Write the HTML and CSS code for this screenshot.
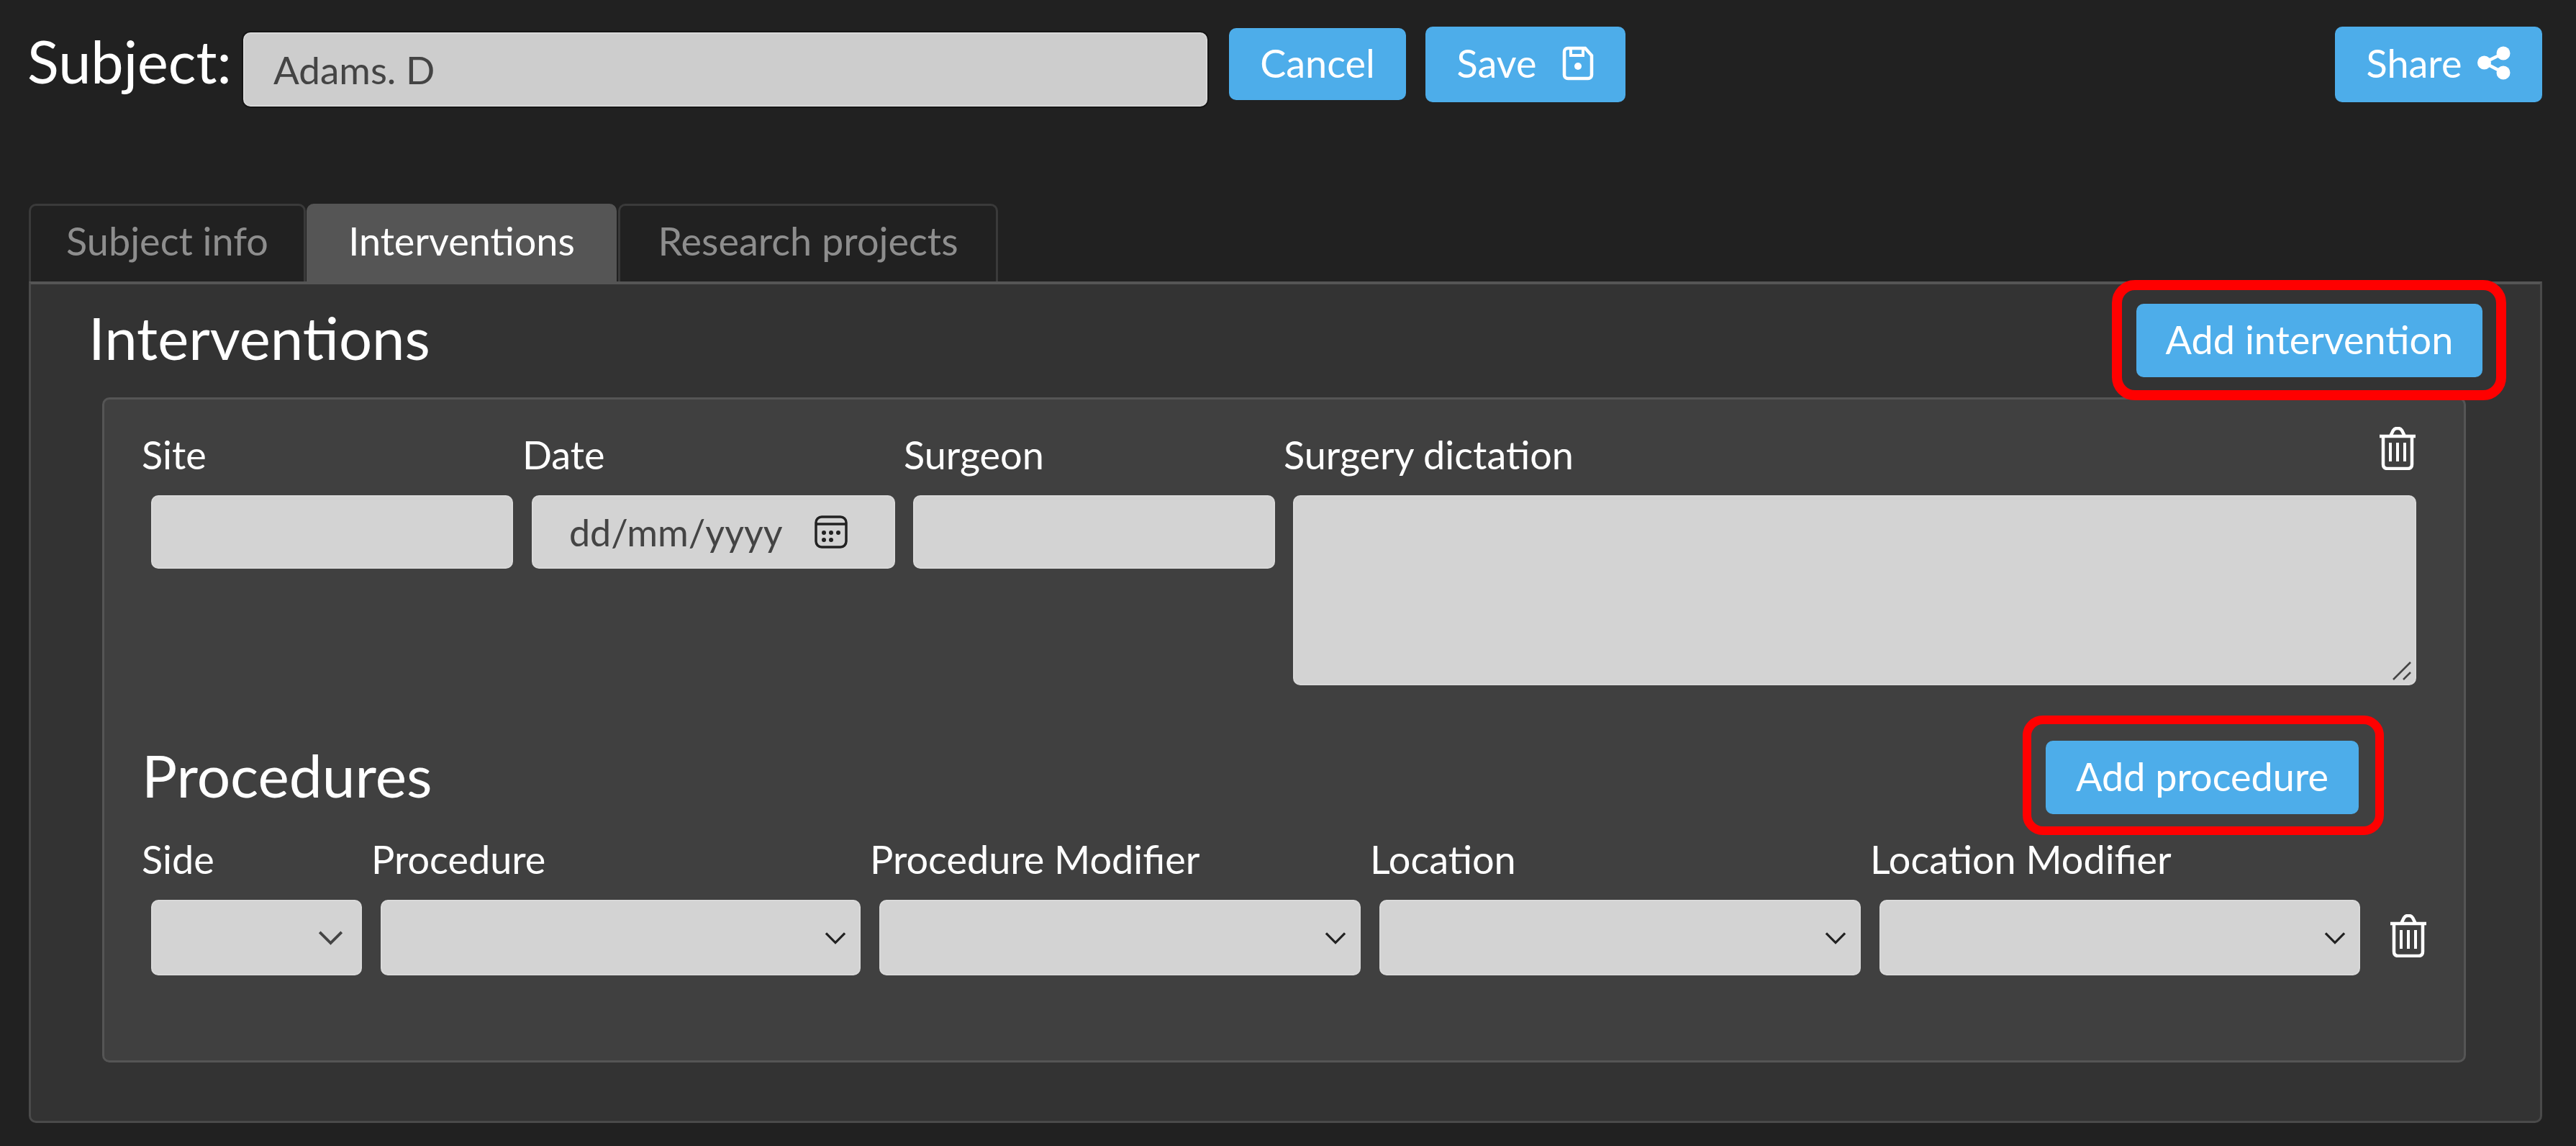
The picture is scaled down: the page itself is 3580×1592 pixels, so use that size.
FILE: index.html
```html
<!DOCTYPE html>
<html lang="en">
<head>
<meta charset="utf-8">
<title>Subject</title>
<link rel="stylesheet" href="styles.css">
</head>
<body>
<header class="topbar">
  <h1 class="subject-label">Subject:</h1>
  <input class="subject-input" type="text" value="Adams. D" aria-label="Subject">
  <button class="btn btn-cancel">Cancel</button>
  <button class="btn btn-save">Save
    <svg class="icon-save" viewBox="0 0 44 48" fill="none" stroke="#fff" stroke-width="4.5"><path d="M8 3h24l9 10v27a5 5 0 0 1-5 5H8a5 5 0 0 1-5-5V8a5 5 0 0 1 5-5z"/><path d="M12 3v10h17V3" stroke-width="4"/><circle cx="22" cy="28" r="5" fill="#fff" stroke="none"/></svg>
  </button>
  <button class="btn btn-share">Share
    <svg class="icon-share" viewBox="0 0 46 48" fill="#fff"><circle cx="36" cy="10" r="9.500"/><circle cx="36" cy="37" r="9.500"/><circle cx="9.500" cy="23" r="9.500"/><path d="M9.500 23L36 10M9.500 23L36 37" stroke="#fff" stroke-width="4.500"/></svg>
  </button>
</header>

<nav class="tabs">
  <div class="tab tab-subject">Subject info</div>
  <div class="tab tab-active">Interventions</div>
  <div class="tab tab-research">Research projects</div>
</nav>

<main class="panel">
  <div class="panel-head">
    <h2 class="panel-title">Interventions</h2>
    <div class="mark mark-intervention"><button class="btn btn-add-intervention">Add intervention</button></div>
  </div>

  <section class="card">
    <div class="intervention-grid">
      <label class="lbl lbl-site">Site</label>
      <label class="lbl lbl-date">Date</label>
      <label class="lbl lbl-surgeon">Surgeon</label>
      <div class="lbl lbl-dictation"><span>Surgery dictation</span>
        <svg class="icon-trash" viewBox="0 0 52 60" fill="none" stroke="#fff" stroke-width="4.500"><path d="M1 13h50M16 13l4-8q2-3 5-3h2q3 0 5 3l4 8"/><path d="M6 13v39q0 6 6 6h28q6 0 6-6V13"/><path d="M16 22v26M26 22v26M36 22v26" stroke-width="4"/></svg>
      </div>
      <div class="field field-site"></div>
      <div class="field field-date"><span>dd/mm/yyyy</span>
        <svg class="icon-cal" viewBox="0 0 46 46" fill="none" stroke="#222" stroke-width="3.500"><rect x="2" y="2" width="42" height="42" rx="8"/><path d="M2 12h42"/><g fill="#222" stroke="none"><circle cx="13" cy="24" r="3"/><circle cx="23" cy="24" r="3"/><circle cx="33" cy="24" r="3"/><circle cx="13" cy="34" r="3"/><circle cx="23" cy="34" r="3"/></g></svg>
      </div>
      <div class="field"></div>
      <div class="field field-text">
        <svg class="grip" viewBox="0 0 28 28" fill="none" stroke="#444" stroke-width="2.500"><path d="M2 26L26 2M16 26l10-10"/></svg>
      </div>
    </div>

    <div class="procedures-head">
      <h3 class="procedures-title">Procedures</h3>
      <div class="mark mark-procedure"><button class="btn btn-add-procedure">Add procedure</button></div>
    </div>

    <div class="procedure-grid">
      <label class="lbl">Side</label>
      <label class="lbl">Procedure</label>
      <label class="lbl">Procedure Modifier</label>
      <label class="lbl">Location</label>
      <label class="lbl">Location Modifier</label>
      <span></span>
      <select class="sel sel-side" aria-label="Side"></select>
      <select class="sel" aria-label="Procedure"></select>
      <select class="sel" aria-label="Procedure Modifier"></select>
      <select class="sel" aria-label="Location"></select>
      <select class="sel" aria-label="Location Modifier"></select>
      <svg class="icon-trash icon-trash-row" viewBox="0 0 52 60" fill="none" stroke="#fff" stroke-width="4.500"><path d="M1 13h50M16 13l4-8q2-3 5-3h2q3 0 5 3l4 8"/><path d="M6 13v39q0 6 6 6h28q6 0 6-6V13"/><path d="M16 22v26M26 22v26M36 22v26" stroke-width="4"/></svg>
    </div>
  </section>
</main>
</body>
</html>
```
FILE: styles.css
```css
* { box-sizing: border-box; }
html, body { margin: 0; height: 100%; }
body {
  background: #212121;
  color: #fff;
  font-family: Lato, "Open Sans", sans-serif;
  padding: 37px 47px 0 40px;
  overflow: hidden;
}
h1, h2, h3 { margin: 0; font-weight: 400; }

.btn {
  display: inline-flex;
  align-items: center;
  justify-content: center;
  border: 0;
  border-radius: 10px;
  background: #4dadea;
  color: #fff;
  font: 400 54px/1 Lato, sans-serif;
  padding: 0 0 3px;
}

/* Header */
.topbar { display: flex; align-items: flex-start; height: 246px; }
.subject-label { font-size: 81px; line-height: 96px; width: 298px; flex: none; margin: 0 0 0 -2px; }
.subject-input {
  width: 1340px;
  height: 103px;
  margin: 8px 0 0 2px;
  padding: 0 0 0 40px;
  border: 2px solid #d8d8d8;
  border-radius: 10px;
  background: #cdcdcd;
  color: #444;
  font: 400 53px Lato, sans-serif;
  box-shadow: 0 0 0 2px #151515;
}
.btn-cancel { width: 246px; height: 100px; margin: 2px 0 0 30px; }
.btn-save { width: 278px; height: 105px; margin-left: 27px; gap: 36px; }
.btn-share { width: 288px; height: 105px; margin-left: auto; gap: 22px; }
.icon-save { width: 44px; height: 48px; }
.icon-share { width: 46px; height: 48px; }

/* Tabs */
.tabs { display: flex; gap: 2px; height: 108px; }
.tab {
  display: flex;
  align-items: center;
  justify-content: center;
  border: 3px solid #3a3a3a;
  border-bottom: 0;
  border-radius: 10px 10px 0 0;
  font-size: 54px;
  color: #8e8e8e;
  padding-bottom: 8px;
}
.tab-subject { width: 385px; }
.tab-active { width: 431px; margin-left: -1px; background: #555; border-color: #555; color: #fff; }
.tab-research { width: 528px; }

/* Panel */
.panel {
  height: 1169px;
  background: #333;
  border: 3px solid #4a4a4a;
  border-top: 4px solid #555;
  border-radius: 0 0 10px 10px;
  padding: 27px 80px 0 99px;
}
.panel-head { display: flex; justify-content: space-between; align-items: flex-start; height: 130px; }
.panel-title { font-size: 81.500px; line-height: 96px; margin: -1px 0 0 -19px; }
.mark { position: relative; }
.mark::after {
  content: "";
  position: absolute;
  border: 14px solid #f00;
  border-radius: 32px;
  pointer-events: none;
}
.mark-intervention::after { inset: -33px -33px -32px -34px; }
.mark-procedure::after { inset: -35px -35px -29px -32px; border-width: 12px; border-radius: 28px; }
.btn-add-intervention { width: 481px; height: 102px; display: flex; }
.btn-add-procedure { width: 435px; height: 102px; display: flex; }

/* Card */
.card {
  width: 3285px;
  height: 924px;
  background: #404040;
  border: 3px solid #555;
  border-radius: 10px;
  padding: 46px 0 0 53px;
}
.lbl { font-size: 54px; line-height: 62px; display: block; margin-left: -13px; }

.intervention-grid {
  display: grid;
  grid-template-columns: 504px 505px 503px 1561px;
  column-gap: 25px;
  row-gap: 25px;
  grid-template-rows: 62px 264px;
  margin-left: 12px;
}
.lbl-dictation { display: flex; justify-content: space-between; align-items: flex-start; }
.field {
  height: 102px;
  background: #d3d3d3;
  border-radius: 10px;
  border: 2px solid #d9d9d9;
  color: #444;
}
.field-site { width: 503px; }
.field-date {
  display: flex;
  align-items: center;
  justify-content: space-between;
  padding: 0 64px 0 50px;
  font-size: 52px;
}
.field-text { height: 264px; position: relative; }
.grip { position: absolute; right: 4px; bottom: 4px; width: 28px; height: 28px; }
.icon-cal { width: 46px; height: 46px; flex: none; }
.icon-trash { width: 52px; height: 60px; flex: none; margin-top: -8px; }

.procedures-head {
  display: flex;
  justify-content: space-between;
  align-items: flex-start;
  width: 3080px;
  height: 211px;
  padding-top: 117px;
}
.procedures-title { font-size: 82px; line-height: 92px; margin: -39px 0 0 -1px; }
.procedures-head .mark { margin-top: -40px; }

.procedure-grid {
  display: grid;
  grid-template-columns: 293px 667px 669px 669px 668px 54px;
  column-gap: 26px;
  row-gap: 25px;
  grid-template-rows: 62px 105px;
  margin-left: 12px;
  align-items: start;
}
.procedure-grid .icon-trash-row { margin: 20px 0 0 15px; }
.sel {
  appearance: none;
  height: 105px;
  width: 100%;
  border: 2px solid #d9d9d9;
  border-radius: 10px;
  background: #d3d3d3 url("data:image/svg+xml,%3Csvg xmlns='http://www.w3.org/2000/svg' viewBox='0 0 36 22'%3E%3Cpath d='M2 3l16 16L34 3' fill='none' stroke='%23222' stroke-width='4'/%3E%3C/svg%3E") no-repeat right 18px center / 30px 18px;
}
.sel-side {
  background: #d3d3d3 url("data:image/svg+xml,%3Csvg xmlns='http://www.w3.org/2000/svg' viewBox='0 0 36 22'%3E%3Cpath d='M2 3l16 16L34 3' fill='none' stroke='%23444' stroke-width='4'/%3E%3C/svg%3E") no-repeat right 24px center / 35px 21px;
}
```
